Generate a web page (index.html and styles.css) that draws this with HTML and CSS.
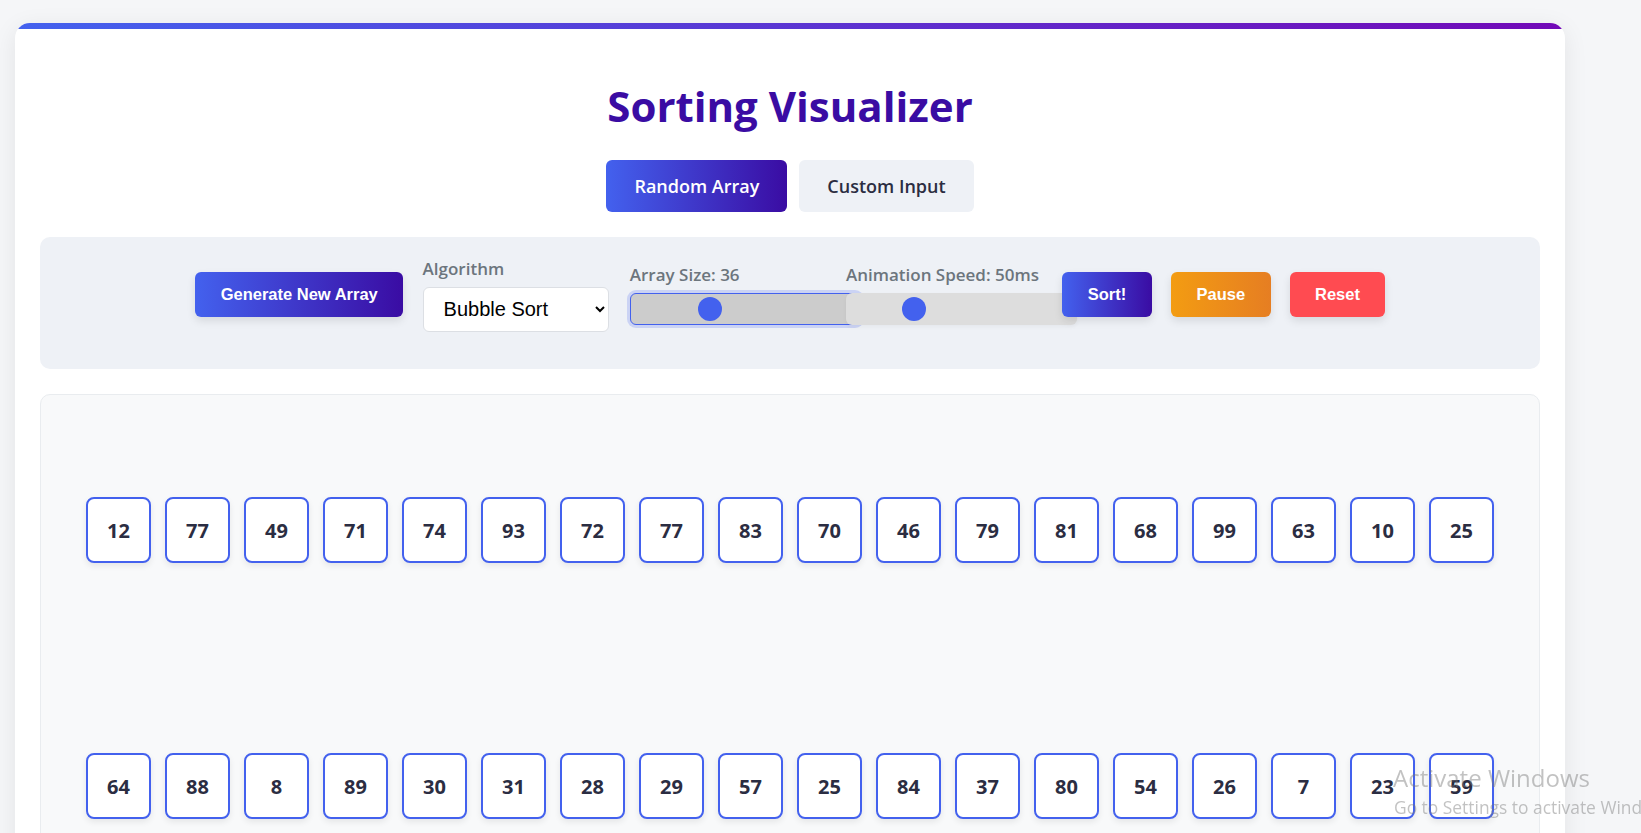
FILE: index.html
```html
<!DOCTYPE html>
<html lang="en">
<head>
<meta charset="UTF-8">
<title>Sorting Visualizer</title>
<link rel="stylesheet" href="styles.css">
</head>
<body>
<div class="card">
  <div class="card-bar"></div>
  <div class="card-body">
    <h1 class="title">Sorting Visualizer</h1>
    <div class="tabs">
      <button class="tab tab-active">Random Array</button>
      <button class="tab">Custom Input</button>
    </div>
    <div class="panel">
      <button class="btn btn-primary btn-generate">Generate New Array</button>
      <div class="group group-select">
        <label class="group-label">Algorithm</label>
        <select class="algo-select">
          <option>Bubble Sort</option>
          <option>Selection Sort</option>
          <option>Insertion Sort</option>
          <option>Merge Sort</option>
          <option>Quick Sort</option>
        </select>
      </div>
      <div class="group group-range">
        <label class="group-label">Array Size: 36</label>
        <input class="range range-focus" type="range" min="5" max="100" value="36">
      </div>
      <div class="group group-range">
        <label class="group-label">Animation Speed: 50ms</label>
        <input class="range" type="range" min="10" max="158" value="50">
      </div>
      <button class="btn btn-primary">Sort!</button>
      <button class="btn btn-pause">Pause</button>
      <button class="btn btn-reset">Reset</button>
    </div>
    <div class="visualizer">
      <div class="item">12</div><div class="item">77</div><div class="item">49</div><div class="item">71</div><div class="item">74</div><div class="item">93</div><div class="item">72</div><div class="item">77</div><div class="item">83</div><div class="item">70</div><div class="item">46</div><div class="item">79</div><div class="item">81</div><div class="item">68</div><div class="item">99</div><div class="item">63</div><div class="item">10</div><div class="item">25</div>
      <div class="item">64</div><div class="item">88</div><div class="item">8</div><div class="item">89</div><div class="item">30</div><div class="item">31</div><div class="item">28</div><div class="item">29</div><div class="item">57</div><div class="item">25</div><div class="item">84</div><div class="item">37</div><div class="item">80</div><div class="item">54</div><div class="item">26</div><div class="item">7</div><div class="item">23</div><div class="item">59</div>
    </div>
  </div>
</div>
<div class="watermark">
  <div class="wm-title">Activate Windows</div>
  <div class="wm-sub">Go to Settings to activate Windows.</div>
</div>
</body>
</html>
```

FILE: styles.css
```css
html {
  overflow: hidden;
}

body {
  margin: 0;
  background: #f5f6f8;
  font-family: "Open Sans", "Noto Sans", sans-serif;
  color: #2b2d42;
}

.card {
  margin: 23px 0 0 15px;
  width: 1550px;
  background: #ffffff;
  border-radius: 15px;
  overflow: hidden;
  box-shadow: 0 5px 25px rgba(0, 0, 0, 0.08);
}

.card-bar {
  height: 6px;
  background: linear-gradient(90deg, #4361ee, #7209b7);
}

.card-body {
  padding: 48px 25px 40px;
}

.title {
  margin: 0 0 26px;
  text-align: center;
  font-size: 42px;
  font-weight: 700;
  line-height: 1.362;
  color: #3a0ca3;
}

.tabs {
  display: flex;
  justify-content: center;
  gap: 12px;
  margin-bottom: 25px;
}

.tab {
  height: 52px;
  padding: 0 28px;
  border: none;
  border-radius: 6px;
  background: #eef1f6;
  color: #2b2d42;
  font-family: "Open Sans", "Noto Sans", sans-serif;
  font-size: 18px;
  font-weight: 600;
}

.tab-active {
  background: linear-gradient(90deg, #4361ee, #3a0ca3);
  color: #ffffff;
}

.panel {
  box-sizing: border-box;
  height: 132px;
  padding: 0 20px 17px;
  display: flex;
  align-items: center;
  justify-content: center;
  gap: 19.2px;
  background: #eef1f6;
  border-radius: 10px;
  margin-bottom: 25px;
}

.btn {
  padding: 12.8px 25.6px;
  border: none;
  border-radius: 6px;
  font-family: "Liberation Sans", Arial, sans-serif;
  font-size: 16.5px;
  font-weight: 700;
  color: #ffffff;
  box-shadow: 0 4px 8px rgba(0, 0, 0, 0.1);
}

.btn-primary {
  background: linear-gradient(90deg, #4361ee, #3a0ca3);
}

.btn-pause {
  background: linear-gradient(90deg, #f39c12, #e67e22);
}

.btn-reset {
  padding: 12.8px 25px;
  background: #ff4b51;
}

.group {
  display: flex;
  flex-direction: column;
  gap: 7px;
}

.group-select {
  width: 188px;
}

.group-range {
  width: 197px;
}

.group-label {
  font-size: 17px;
  font-weight: 600;
  line-height: 22px;
  color: #6c757d;
  white-space: nowrap;
}

.algo-select {
  box-sizing: border-box;
  width: 186px;
  height: 45px;
  padding: 0 12px 0 16px;
  border: 1px solid #dcdfe4;
  border-radius: 6px;
  background: #ffffff;
  font-family: "Liberation Sans", Arial, sans-serif;
  font-size: 20px;
  color: #000000;
}

.range {
  -webkit-appearance: none;
  appearance: none;
  box-sizing: border-box;
  flex: none;
  width: 231px;
  height: 32px;
  margin: 0;
  border: 1px solid transparent;
  border-radius: 6px;
  background: #dddddd;
  outline: none;
  box-shadow: 0 2px 4px rgba(0, 0, 0, 0.04);
}

.range-focus {
  background: #cccccc;
  border-color: #4361ee;
  box-shadow: 0 0 0 3px rgba(67, 97, 238, 0.2);
}

.range::-webkit-slider-thumb {
  -webkit-appearance: none;
  appearance: none;
  width: 24px;
  height: 24px;
  border-radius: 50%;
  background: #4361ee;
  border: none;
}

.visualizer {
  box-sizing: border-box;
  height: 530px;
  padding: 102px 40px 0;
  display: flex;
  flex-wrap: wrap;
  align-content: flex-start;
  justify-content: center;
  column-gap: 14px;
  row-gap: 190px;
  background: #f8f9fa;
  border: 1px solid #e9ecef;
  border-radius: 10px;
}

.item {
  box-sizing: border-box;
  width: 65px;
  height: 66px;
  display: flex;
  align-items: center;
  justify-content: center;
  background: #ffffff;
  border: 2px solid #4361ee;
  border-radius: 8px;
  box-shadow: 0 3px 6px rgba(0, 0, 0, 0.08);
  font-size: 20px;
  font-weight: 700;
  color: #2b2d42;
}

.watermark {
  position: fixed;
  left: 1393px;
  top: 763px;
  white-space: nowrap;
  color: rgba(120, 120, 120, 0.45);
  font-family: "Open Sans", "Noto Sans", sans-serif;
}

.wm-title {
  font-size: 24px;
  line-height: 30px;
}

.wm-sub {
  margin: 2px 0 0 1px;
  font-size: 17.4px;
  line-height: 24px;
}
```
